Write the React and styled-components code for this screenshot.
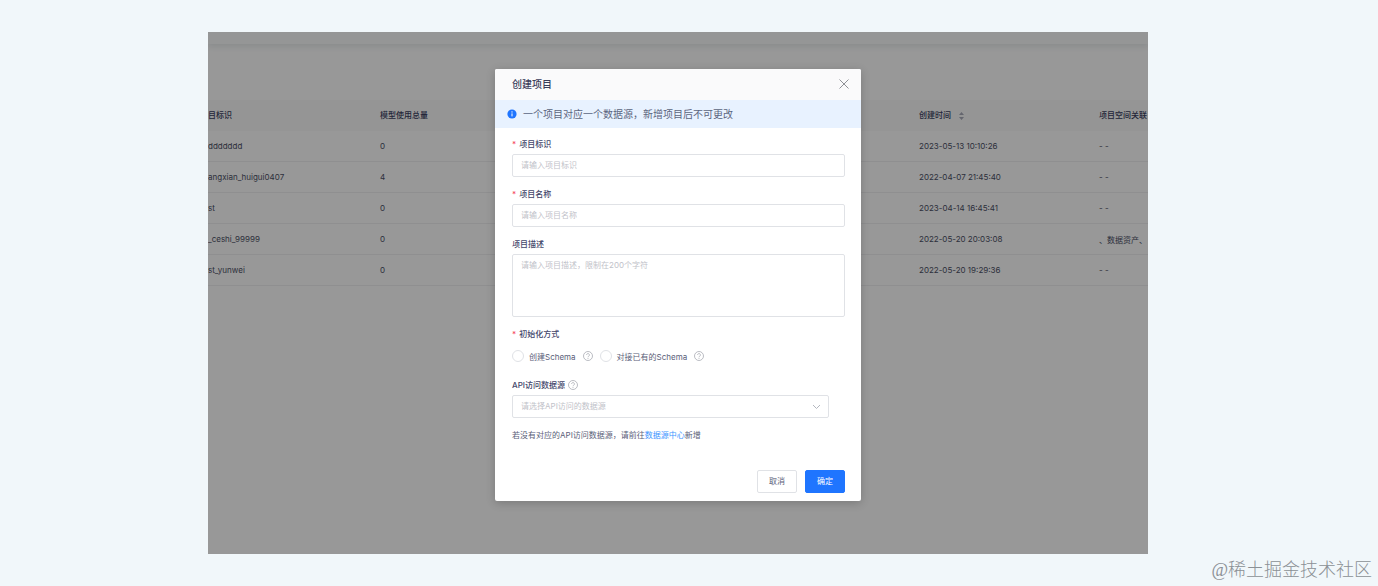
import { useState } from "react";
import styled, { createGlobalStyle } from "styled-components";

const GlobalStyle = createGlobalStyle`
  * {
    box-sizing: border-box;
  }
  body {
    margin: 0;
    background: #f1f7fa;
    font-family: Inter, "Liberation Sans", "Noto Sans CJK SC", sans-serif;
    font-size: 8px;
    color: #5a5e78;
  }
  button,
  input,
  textarea,
  select {
    font: inherit;
    color: inherit;
  }
`;
const Page = styled.div`
  position: relative;
  min-height: 100vh;
  padding: 32px 230px 32px 208px;
  display: flex;
`;
const Screen = styled.main`
  position: relative;
  flex: 1;
  min-width: 0;
  overflow: hidden;
  background: #fdfdfd;
`;
const TopBar = styled.div`
  height: 12px;
  margin-bottom: 56px;
  background: #f9fbfb;
  box-shadow: 0 2px 6px #e2e7e8;
`;
const Table = styled.table`
  width: 100%;
  table-layout: fixed;
  border-collapse: separate;
  border-spacing: 0;
`;
const Th = styled.th`
  height: 31px;
  padding: 0 0 2px;
  width: ${({ $width }) => $width || "auto"};
  text-align: left;
  font-weight: 500;
  white-space: nowrap;
  color: #3a3e60;
  background: #f8f8f9;
`;
const Td = styled.td`
  height: 31px;
  padding: 0;
  white-space: nowrap;
  color: #4c5065;
  border-bottom: 1px solid #eeeff0;
`;
const SortIcon = styled.svg`
  width: 5px;
  height: 8px;
  margin-left: 8px;
  vertical-align: middle;
  fill: #a8abb8;
`;
const Mask = styled.div`
  position: absolute;
  inset: 0;
  padding-top: 37px;
  display: flex;
  justify-content: center;
  align-items: flex-start;
  background: rgba(0, 0, 0, 0.4);
`;
const Dialog = styled.form`
  width: 366px;
  overflow: hidden;
  border-radius: 2px;
  background: #fff;
  box-shadow: 0 2px 10px rgba(0, 0, 0, 0.2);
`;
const Header = styled.header`
  height: 31px;
  padding: 0 12px 2px 17px;
  display: flex;
  align-items: center;
  justify-content: space-between;
  background: #fafafb;
`;
const Title = styled.h1`
  margin: 0;
  font-size: 10px;
  line-height: 16px;
  font-weight: 500;
  color: #3a3d5a;
`;
const CloseButton = styled.button`
  display: flex;
  padding: 0;
  border: 0;
  background: none;
  color: #8f9196;
  cursor: pointer;
`;
const Notice = styled.div`
  height: 28px;
  padding: 0 12px;
  display: flex;
  align-items: center;
  gap: 6px;
  font-size: 10px;
  line-height: 14px;
  color: #5b6580;
  background: #e8f2ff;
`;
const Body = styled.div`
  padding: 8px 16px 0 17px;
  display: flex;
  flex-direction: column;
  gap: 9px;
`;
const Field = styled.div`
  display: flex;
  flex-direction: column;
  gap: 2px;
  padding-right: ${({ $inset }) => ($inset ? "16px" : "0")};
`;
const LabelRow = styled.div`
  display: flex;
  align-items: center;
  gap: 3px;
  line-height: 16px;
  font-weight: 500;
  color: #43466a;
`;
const Star = styled.span`
  color: #f5455c;
`;
const Input = styled.input`
  width: 100%;
  height: 23px;
  padding: 0 8px 1px;
  border: 1px solid #e0e2e6;
  border-radius: 2px;
  outline: none;
  background: #fff;
  &::placeholder {
    color: #bfc2c9;
  }
`;
const TextArea = styled.textarea`
  display: block;
  width: 100%;
  height: 63px;
  padding: 4px 8px;
  line-height: 12px;
  border: 1px solid #e0e2e6;
  border-radius: 2px;
  outline: none;
  resize: none;
  &::placeholder {
    color: #bfc2c9;
  }
`;
const SelectBox = styled.div`
  display: grid;
  align-items: center;
  > * {
    grid-area: 1 / 1;
  }
  svg {
    justify-self: end;
    margin-right: 8px;
    pointer-events: none;
  }
`;
const Select = styled.select`
  appearance: none;
  width: 100%;
  height: 23px;
  padding: 0 8px 1px;
  border: 1px solid #e0e2e6;
  border-radius: 2px;
  outline: none;
  background: #fff;
  color: #bfc2c9;
`;
const RadioRow = styled.div`
  height: 24px;
  display: flex;
  align-items: center;
  gap: 7px;
`;
const RadioLabel = styled.label`
  display: flex;
  align-items: center;
  gap: 5px;
`;
const Radio = styled.input`
  appearance: none;
  width: 12px;
  height: 12px;
  margin: 0;
  border: 1px solid #e0e2e6;
  border-radius: 50%;
  background: #fff;
  &:checked {
    border: 4px solid #1f75ff;
  }
`;
const Note = styled.p`
  margin: 0;
  line-height: 16px;
`;
const Link = styled.a`
  color: #3c94ff;
  text-decoration: none;
`;
const Footer = styled.footer`
  padding: 27px 16px 8px;
  display: flex;
  justify-content: flex-end;
  gap: 8px;
`;
const Button = styled.button`
  width: 40px;
  height: 23px;
  padding: 0 0 2px;
  border: 1px solid ${({ $primary }) => ($primary ? "#1f75ff" : "#e0e2e6")};
  border-radius: 2px;
  background: ${({ $primary }) => ($primary ? "#1f75ff" : "#fff")};
  color: ${({ $primary }) => ($primary ? "#fff" : "#5a5e78")};
  cursor: pointer;
`;
const Watermark = styled.div`
  position: absolute;
  right: 6px;
  bottom: 4px;
  font-family: "Liberation Serif", "Noto Sans CJK SC", serif;
  font-size: 18px;
  line-height: 24px;
  font-weight: 300;
  color: #8b9095;
`;

const HelpIcon = () => (
  <svg width="10" height="10" viewBox="0 0 20 20" fill="none" stroke="#a4a7af" strokeWidth="1.5">
    <circle cx="10" cy="10" r="9" />
    <path d="M7.2 8a2.8 2.8 0 1 1 4.3 2.3c-1 .7-1.5 1.1-1.5 2.2" />
    <path d="M10 14v1.8" />
  </svg>
);

const rows = [
  { id: "ddddddd", total: "0", time: "2023-05-13 10:10:26", space: "- -" },
  { id: "angxian_huigui0407", total: "4", time: "2022-04-07 21:45:40", space: "- -" },
  { id: "st", total: "0", time: "2023-04-14 16:45:41", space: "- -" },
  { id: "_ceshi_99999", total: "0", time: "2022-05-20 20:03:08", space: "、数据资产、" },
  { id: "st_yunwei", total: "0", time: "2022-05-20 19:29:36", space: "- -" },
];

const ProjectTable = () => (
  <Table>
    <thead>
      <tr>
        <Th $width="172px">目标识</Th>
        <Th>模型使用总量</Th>
        <Th $width="180px">
          创建时间
          <SortIcon viewBox="0 0 5 8">
            <path d="M2.5 0 5 3H0zM2.5 8 5 5H0z" />
          </SortIcon>
        </Th>
        <Th $width="49px">项目空间关联</Th>
      </tr>
    </thead>
    <tbody>
      {rows.map((row) => (
        <tr key={row.id}>
          <Td>{row.id}</Td>
          <Td>{row.total}</Td>
          <Td>{row.time}</Td>
          <Td>{row.space}</Td>
        </tr>
      ))}
    </tbody>
  </Table>
);

const CreateProjectDialog = () => {
  const [mode, setMode] = useState("");
  return (
    <Dialog role="dialog" aria-labelledby="title" onSubmit={(e) => e.preventDefault()}>
      <Header>
        <Title id="title">创建项目</Title>
        <CloseButton type="button" aria-label="关闭">
          <svg width="10" height="10" viewBox="0 0 10 10" fill="none" stroke="currentColor">
            <path d="M.5.5l9 9M9.5.5l-9 9" />
          </svg>
        </CloseButton>
      </Header>
      <Notice>
        <svg width="10" height="10" viewBox="0 0 20 20">
          <circle cx="10" cy="10" r="9.2" fill="#1f75ff" />
          <circle cx="10" cy="5.8" r="1.3" fill="#fff" />
          <path d="M10 8.8v6" stroke="#fff" strokeWidth="2" />
        </svg>
        一个项目对应一个数据源，新增项目后不可更改
      </Notice>
      <Body>
        <Field>
          <LabelRow>
            <Star>*</Star>
            <label htmlFor="code">项目标识</label>
          </LabelRow>
          <Input id="code" placeholder="请输入项目标识" />
        </Field>
        <Field>
          <LabelRow>
            <Star>*</Star>
            <label htmlFor="name">项目名称</label>
          </LabelRow>
          <Input id="name" placeholder="请输入项目名称" />
        </Field>
        <Field>
          <LabelRow>
            <label htmlFor="desc">项目描述</label>
          </LabelRow>
          <TextArea id="desc" maxLength={200} placeholder="请输入项目描述，限制在200个字符" />
        </Field>
        <Field role="radiogroup" aria-labelledby="mode">
          <LabelRow>
            <Star>*</Star>
            <span id="mode">初始化方式</span>
          </LabelRow>
          <RadioRow>
            <RadioLabel>
              <Radio
                type="radio"
                name="mode"
                checked={mode === "create"}
                onChange={() => setMode("create")}
              />
              创建Schema
            </RadioLabel>
            <HelpIcon />
            <RadioLabel>
              <Radio
                type="radio"
                name="mode"
                checked={mode === "existing"}
                onChange={() => setMode("existing")}
              />
              对接已有的Schema
            </RadioLabel>
            <HelpIcon />
          </RadioRow>
        </Field>
        <Field $inset>
          <LabelRow>
            <label htmlFor="source">API访问数据源</label>
            <HelpIcon />
          </LabelRow>
          <SelectBox>
            <Select id="source" defaultValue="">
              <option value="">请选择API访问的数据源</option>
            </Select>
            <svg width="9" height="9" viewBox="0 0 9 9" fill="none" stroke="#b4b7bf">
              <path d="M1 3l3.5 3.5L8 3" />
            </svg>
          </SelectBox>
        </Field>
        <Note>
          若没有对应的API访问数据源，请前往<Link href="#source-center">数据源中心</Link>新增
        </Note>
      </Body>
      <Footer>
        <Button type="button">取消</Button>
        <Button type="submit" $primary>
          确定
        </Button>
      </Footer>
    </Dialog>
  );
};

const App = () => {
  return (
    <>
      <GlobalStyle />
      <Page>
        <Screen>
          <TopBar />
          <ProjectTable />
          <Mask>
            <CreateProjectDialog />
          </Mask>
        </Screen>
        <Watermark>@稀土掘金技术社区</Watermark>
      </Page>
    </>
  );
};

export default App;
